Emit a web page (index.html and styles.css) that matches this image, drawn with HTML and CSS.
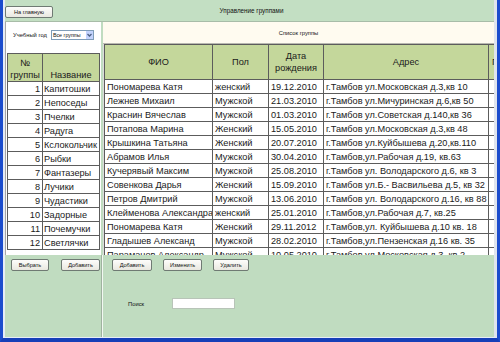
FILE: index.html
```html
<!DOCTYPE html>
<html lang="ru">

<head>
    <meta charset="UTF-8">
    <title>Управление группами</title>
    <link rel="stylesheet" href="styles.css">
</head>

<body>
    <div class="window">
        <div class="form">
            <!--top bar-->
            <div class="topbar">
                <button class="btn btn-home">На главную</button>
                <div class="title">Управление группами</div>
            </div>

            <div class="main">
                <!--groups list-->
                <div class="left">
                    <div class="filter">
                        <span>Учебный год</span>
                        <div class="select">
                            <span class="select-text">Все группы</span>
                            <span class="select-btn">
                                <svg width="7" height="8" viewBox="0 0 7 8">
                                    <path d="M1.5 3 L3.5 5 L5.5 3" fill="none" stroke="#4d6185" stroke-width="1.3"/>
                                </svg>
                            </span>
                        </div>
                    </div>
                    <table class="groups">
                        <colgroup><col class="g-num"><col class="g-name"></colgroup>
                        <thead>
                            <tr><th>№<br>группы</th><th>Название</th></tr>
                        </thead>
                        <tbody>
                            <tr><td class="num">1</td><td>Капитошки</td></tr>
                            <tr><td class="num">2</td><td>Непоседы</td></tr>
                            <tr><td class="num">3</td><td>Пчелки</td></tr>
                            <tr><td class="num">4</td><td>Радуга</td></tr>
                            <tr><td class="num">5</td><td>Кслокольчик</td></tr>
                            <tr><td class="num">6</td><td>Рыбки</td></tr>
                            <tr><td class="num">7</td><td>Фантазеры</td></tr>
                            <tr><td class="num">8</td><td>Лучики</td></tr>
                            <tr><td class="num">9</td><td>Чудастики</td></tr>
                            <tr><td class="num">10</td><td>Задорные</td></tr>
                            <tr><td class="num">11</td><td>Почемучки</td></tr>
                            <tr><td class="num">12</td><td>Светлячки</td></tr>
                        </tbody>
                    </table>
                </div>

                <!--pupils list-->
                <div class="right">
                    <div class="caption">Список группы</div>
                    <div class="grid-wrap">
                        <table class="pupils">
                            <colgroup>
                                <col class="c-fio"><col class="c-sex"><col class="c-date"><col class="c-addr"><col class="c-more">
                            </colgroup>
                            <thead>
                                <tr><th>ФИО</th><th>Пол</th><th>Дата<br>рождения</th><th>Адрес</th><th class="more">Г</th></tr>
                            </thead>
                            <tbody>
                                <tr><td>Пономарева Катя</td><td>женский</td><td>19.12.2010</td><td>г.Тамбов ул.Московская д.3,кв 10</td><td></td></tr>
                                <tr><td>Лежнев Михаил</td><td>Мужской</td><td>21.03.2010</td><td>г.Тамбов ул.Мичуринская д.6,кв 50</td><td></td></tr>
                                <tr><td>Краснин Вячеслав</td><td>Мужской</td><td>01.03.2010</td><td>г.Тамбов ул.Советская д.140,кв 36</td><td></td></tr>
                                <tr><td>Потапова Марина</td><td>Женский</td><td>15.05.2010</td><td>г.Тамбов ул.Московская д.3,кв 48</td><td></td></tr>
                                <tr><td>Крышкина Татьяна</td><td>Женский</td><td>20.07.2010</td><td>г.Тамбов ул.Куйбышева д.20,кв.110</td><td></td></tr>
                                <tr><td>Абрамов Илья</td><td>Мужской</td><td>30.04.2010</td><td>г.Тамбов,ул.Рабочая д.19, кв.63</td><td></td></tr>
                                <tr><td>Кучерявый Максим</td><td>Мужской</td><td>25.08.2010</td><td>г.Тамбов ул. Володарского д.6, кв 3</td><td></td></tr>
                                <tr><td>Совенкова Дарья</td><td>Женский</td><td>15.09.2010</td><td>г.Тамбов ул.Б.- Васвильева д.5, кв 32</td><td></td></tr>
                                <tr><td>Петров Дмитрий</td><td>Мужской</td><td>13.06.2010</td><td>г.Тамбов ул. Володарского д.16, кв 88</td><td></td></tr>
                                <tr><td>Клейменова Александра</td><td>женский</td><td>25.01.2010</td><td>г.Тамбов,ул.Рабочая д.7, кв.25</td><td></td></tr>
                                <tr><td>Пономарева Катя</td><td>Женский</td><td>29.11.2012</td><td>г.Тамбов,ул. Куйбышева д.10 кв. 18</td><td></td></tr>
                                <tr><td>Гладышев Александ</td><td>Мужской</td><td>28.02.2010</td><td>г.Тамбов,ул.Пензенская д.16 кв. 35</td><td></td></tr>
                                <tr><td>Параманов Александр</td><td>Мужской</td><td>10.05.2010</td><td>г.Тамбов ул.Московская д.3, кв 2</td><td></td></tr>
                            </tbody>
                        </table>
                    </div>
                </div>
            </div>

            <!--buttons and search-->
            <div class="bottom">
                <div class="b-left">
                    <button class="btn w38">Выбрать</button>
                    <button class="btn w39">Добавить</button>
                </div>
                <div class="b-right">
                    <div class="actions">
                        <button class="btn w40">Добавить</button>
                        <button class="btn w39">Изменить</button>
                        <button class="btn w36">Удалить</button>
                    </div>
                    <div class="search">
                        <span>Поиск</span>
                        <input class="search-input" type="text">
                    </div>
                </div>
            </div>
        </div>
    </div>
</body>

</html>
```

FILE: styles.css
```css
/* form layout */
body {
    margin: 0;
    font-family: "Liberation Sans", Arial, sans-serif;
    color: #111;
}

.window {
    width: 500px;
    height: 342px;
    box-sizing: border-box;
    background: #1f4fd1;
    border-left: 3px solid #1b4ccd;
    border-right: 3px solid #1b4ccd;
    border-bottom: 4px solid #163fb8;
}

.form {
    height: 337px;
    background: #c0dcc0;
    border-left: 2px solid #e6ecf6;
    border-right: 3px solid #dfe4ee;
    border-bottom: 1px solid #e6ecf6;
    display: flex;
    flex-direction: column;
}

.topbar {
    height: 21px;
    border-bottom: 1px solid #a8bca8;
    background: #c3dfc3;
    display: flex;
    align-items: center;
    position: relative;
}

.title {
    position: absolute;
    left: 0;
    right: 0;
    top: 7px;
    text-align: center;
    font-size: 6.3px;
    padding-left: 4px;
}

.btn {
    font-family: "Liberation Sans", Arial, sans-serif;
    font-size: 5.6px;
    height: 12px;
    padding: 0;
    border: 1px solid #6f7a73;
    border-radius: 2px;
    background: linear-gradient(#fdfdfb, #e9e8e0);
    color: #111;
}

.btn-home {
    width: 48px;
    margin-left: 0;
    margin-top: 2px;
}

.main {
    height: 233px;
    display: flex;
}

.left {
    width: 95px;
    background: #fff;
    border-left: 1px solid #a6a6a6;
}

.filter {
    height: 26px;
    display: flex;
    align-items: center;
    gap: 4px;
    padding-left: 7px;
    font-size: 5.8px;
}

.select {
    width: 41px;
    height: 8px;
    border: 1px solid #7f9db9;
    display: flex;
    align-items: center;
    justify-content: space-between;
    font-size: 5.3px;
}

.select-text {
    padding-left: 1px;
}

.select-btn {
    width: 7px;
    height: 8px;
    background: #c3d3fd;
    display: flex;
}

.groups,
.pupils {
    border-collapse: collapse;
    table-layout: fixed;
    font-family: "Liberation Sans", Arial, sans-serif;
    font-size: 9.2px;
    color: #1a1a1a;
}

.groups {
    width: 92px;
    margin: 5px 0 0 1px;
}

.g-num {
    width: 35px;
}

.g-name {
    width: 57px;
}

th,
td {
    border: 1px solid #5c5c5c;
    padding: 0 2px;
    white-space: nowrap;
    overflow: hidden;
    line-height: 12px;
}

td {
    padding-top: 2px;
    line-height: 11px;
    vertical-align: top;
}

th {
    background: #c4d79b;
    font-weight: normal;
    text-align: center;
}

.groups th {
    height: 27px;
    vertical-align: bottom;
}

.groups td {
    height: 10.75px;
    padding-left: 1px;
}

.groups td.num {
    text-align: right;
    padding-right: 2px;
}

.right {
    width: 391px;
    margin-left: 2px;
    background: #fff;
}

.caption {
    height: 22px;
    background: #fffbf0;
    border-bottom: 1px solid #b8b8b0;
    box-sizing: border-box;
    display: flex;
    align-items: center;
    justify-content: center;
    font-size: 5.8px;
    padding-top: 1px;
}

.grid-wrap {
    height: 211px;
    overflow: hidden;
    border-left: 1px solid #dcdcdc;
}

.pupils {
    width: 444px;
}

.c-fio {
    width: 108px;
}

.c-sex {
    width: 56px;
}

.c-date {
    width: 55px;
}

.c-addr {
    width: 165px;
}

.c-more {
    width: 60px;
}

.pupils th {
    height: 34px;
}

.pupils th.more {
    text-align: left;
    padding-left: 3px;
}

.pupils td {
    height: 10.75px;
}

.bottom {
    flex: 1;
    display: flex;
}

.b-left {
    border-right: 1px solid #9fb29f;
    display: flex;
    align-items: flex-start;
    gap: 12px;
    padding: 4px 0 0 6px;
    box-sizing: border-box;
    width: 97px;
}

.b-right {
    flex: 1;
    border-left: 1px solid #f2f8f2;
    padding: 4px 0 0 9px;
}

.actions {
    display: flex;
    gap: 11px;
}

.w36 {
    width: 36px;
}

.w38 {
    width: 38px;
}

.w39 {
    width: 39px;
}

.w40 {
    width: 40px;
}

.search {
    display: flex;
    align-items: center;
    margin-top: 27px;
    padding-left: 16px;
    font-size: 5.8px;
}

.search-input {
    width: 63px;
    height: 11px;
    box-sizing: border-box;
    margin-left: 28px;
    border: 1px solid #b8c4b8;
    background: #fff;
    padding: 0;
}
```
